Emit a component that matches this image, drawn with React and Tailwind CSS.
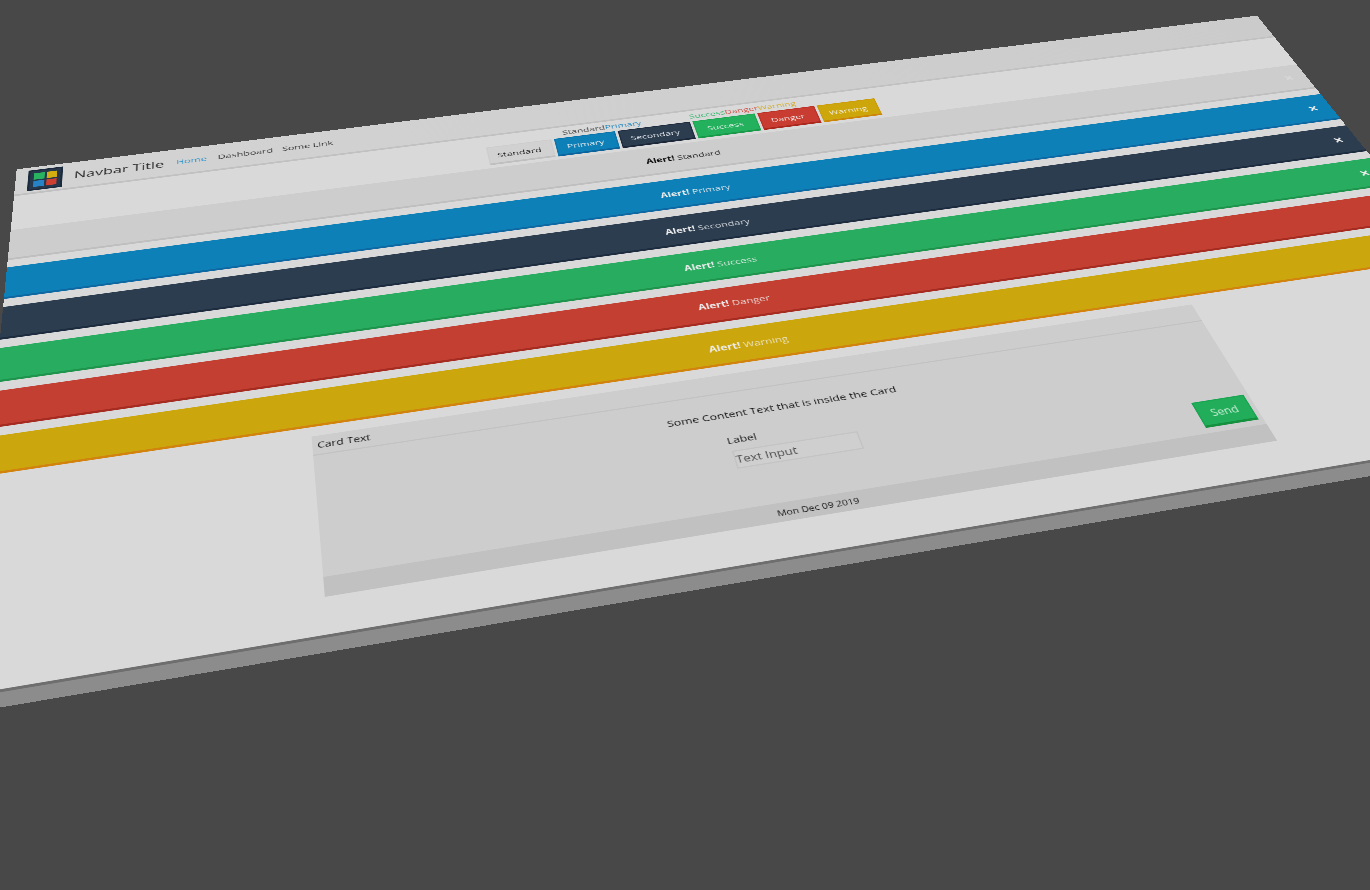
import React from "react";

const links = [
  { label: "Home", cls: "text-[#2a93cc] w-[59px]" },
  { label: "Dashboard", cls: "text-[#3a3a3a] w-[92px]" },
  { label: "Some Link", cls: "text-[#3a3a3a] w-[90px]" },
];

const words = [
  { label: "Standard", cls: "text-[#4a4a4a]" },
  { label: "Primary", cls: "text-[#2b8cc0]" },
  { label: "Secondary", cls: "text-[#d8d8d8]" },
  { label: "Success", cls: "text-[#35b86f]" },
  { label: "Danger", cls: "text-[#d0544a]" },
  { label: "Warning", cls: "text-[#d3ae30]" },
];

const buttons = [
  { label: "Standard", cls: "w-[96px] bg-[#d1d1d1] border-[#cdcdcd] border-b-[#bfbfbf] text-[#1f1f1f]" },
  { label: "Primary", cls: "w-[91px] bg-[#0d80b8] border-[#0b74ab] border-b-[#0d639c] text-[#dfe6ea]" },
  { label: "Secondary", cls: "w-[109px] bg-[#2c3d50] border-[#1f2c40] border-b-[#1c283a] text-[#dfe2e6]" },
  { label: "Success", cls: "w-[95px] bg-[#23b15d] border-[#1fa754] border-b-[#189a48] text-[#dfeee5]" },
  { label: "Danger", cls: "w-[88px] bg-[#c93c31] border-[#bd3227] border-b-[#ab281e] text-[#eedfdd]" },
  { label: "Warning", cls: "w-[90px] bg-[#cda60c] border-[#cb9c0b] border-b-[#cb850b] text-[#eee8d3]" },
];

const alerts = [
  { label: "Standard", cls: "bg-[#cdcdcd] border-[#bfbfbf] text-[#2c2c2c]", strong: "text-[#0c0c0c]", close: "text-[#d8d8d8]" },
  { label: "Primary", cls: "bg-[#0d80b8] border-[#0e68a2] text-[#d4e0e8]", strong: "text-[#ececec]", close: "text-[#ececec]" },
  { label: "Secondary", cls: "bg-[#2d3d50] border-[#1e2c40] text-[#cfd3d8]", strong: "text-[#ececec]", close: "text-[#ececec]" },
  { label: "Success", cls: "bg-[#28ad60] border-[#1e944c] text-[#d0e6d9]", strong: "text-[#ececec]", close: "text-[#ececec]" },
  { label: "Danger", cls: "bg-[#c33f32] border-[#a62b20] text-[#e6cfcb]", strong: "text-[#ececec]", close: "text-[#ececec]" },
  { label: "Warning", cls: "bg-[#cba60d] border-[#d1830e] text-[#eae0bb]", strong: "text-[#ececec]", close: "text-[#ececec]" },
];

function Logo() {
  return (
    <div className="grid h-12 w-12 shrink-0 grid-cols-2 gap-[3px] border-[3px] border-[#1c2a3d] bg-[#27384b] p-[5px]">
      <span className="bg-[#27b35f]" />
      <span className="bg-[#d3ae10]" />
      <span className="bg-[#2583c6]" />
      <span className="bg-[#cd3f31]" />
    </div>
  );
}

function Navbar() {
  return (
    <nav className="flex h-[63px] shrink-0 items-start border-b-4 border-[#c1c1c1] bg-gradient-to-r from-[#d3d3d3] to-[#cbcbcb] pt-[7px] pl-[17px]">
      <Logo />
      <div className="ml-4 flex h-[47px] w-[143px] items-center text-[22.4px] text-[#303030]">Navbar Title</div>
      <div className="flex h-[46px] items-center text-[15.3px]">
        {links.map((l) => (
          <a key={l.label} className={l.cls}>
            {l.label}
          </a>
        ))}
      </div>
    </nav>
  );
}

function Alert({ label, cls, strong, close }) {
  return (
    <div className={`flex h-[64.5px] shrink-0 items-center border-b-4 pt-[2px] pr-[14px] pl-2 ${cls}`}>
      <div className="flex-1 text-center">
        <b className={strong}>Alert!</b> {label}
      </div>
      <div className={`flex w-7 justify-center ${close}`}>
        <svg className="h-[12px] w-[12px]" viewBox="0 0 10 10" stroke="currentColor" strokeWidth="2.2">
          <path d="M1 1L9 9M9 1L1 9" />
        </svg>
      </div>
    </div>
  );
}

function Card() {
  return (
    <section className="mt-4 ml-[383px] flex h-[252px] w-[1150px] shrink-0 flex-col bg-[#cdcdcd] text-[#181818]">
      <header className="h-[33px] border-b-2 border-[#c2c2c2] pt-1 pl-[6px] text-[14.4px] leading-6">Card Text</header>
      <div className="flex flex-1 flex-col items-center pt-6">
        <p className="text-[15.2px] leading-6">Some Content Text that is inside the Card</p>
        <div className="mt-[19px] w-[158px]">
          <div className="-ml-[2px] text-[14.8px] leading-6">Label</div>
          <div className="mt-[6px] h-[30px] border-2 border-[#c4c4c4] bg-[#cfcfcf] text-base leading-[26px] text-[#505050]">
            Text Input
          </div>
        </div>
        <div className="mt-[10px] mr-[6px] flex h-[44px] w-[70px] items-center justify-center self-end border-2 border-b-4 border-[#1aa552] border-b-[#14903f] bg-[#22ad5a] text-[15.5px] text-[#c8ecd5]">
          Send
        </div>
      </div>
      <footer className="h-[29px] bg-[#c1c1c1] text-center text-[12.3px] leading-[31px]">Mon Dec 09 2019</footer>
    </section>
  );
}

export default function App() {
  return (
    <main className="h-[890px] w-[1370px] overflow-hidden bg-[#484848]">
      <div className="flex w-[1920px] origin-top-left flex-col font-['Open_Sans',sans-serif] text-[15.1px] leading-6 [transform:matrix3d(0.72214,-0.07911,0,0.00006057,-0.046225,0.37316,0,-0.00028015,0,0,1,0,16.7,169.3,0,1)]">
        <div className="flex h-[926px] flex-col bg-[#d9d9d9]">
          <Navbar />
          <div className="flex h-[76px] shrink-0 flex-col items-center">
            <div className="mr-1 flex h-[26px] items-start pt-px text-[14.95px] leading-6">
              {words.map((w) => (
                <span key={w.label} className={w.cls}>
                  {w.label}
                </span>
              ))}
            </div>
            <div className="flex gap-1">
              {buttons.map((b) => (
                <div
                  key={b.label}
                  className={`flex h-[43px] items-center justify-center border-2 border-b-4 pr-[3px] ${b.cls}`}
                >
                  {b.label}
                </div>
              ))}
            </div>
          </div>
          <div className="flex flex-col gap-[15.8px]">
            {alerts.map((a) => (
              <Alert key={a.label} {...a} />
            ))}
          </div>
          <Card />
        </div>
        <div className="h-[4px] bg-[#6e6e6e]" />
        <div className="h-[20px] bg-[#8c8c8c]" />
      </div>
    </main>
  );
}
